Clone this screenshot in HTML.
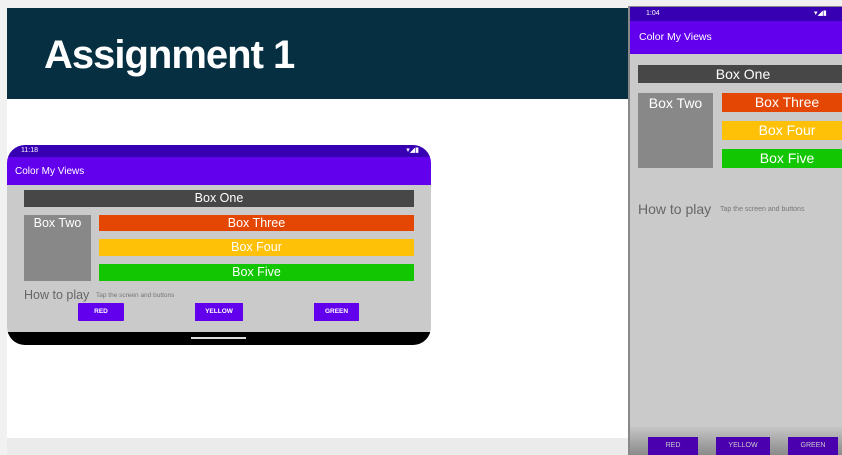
<!DOCTYPE html>
<html><head><style>
*{margin:0;padding:0;box-sizing:border-box}
body{width:842px;height:455px;overflow:hidden;background:#f1f1f1;font-family:"Liberation Sans",sans-serif;position:relative}
.a{position:absolute}
.c{color:#fff;text-align:center;font-size:14px}
</style></head><body>
<div class="a" style="left:7px;top:8px;width:835px;height:430px;background:#fff"></div>
<div class="a" style="left:7px;top:438px;width:835px;height:17px;background:#ebebeb"></div>
<div class="a" style="left:7px;top:8px;width:621px;height:91px;background:#062f42"></div>
<div class="a" style="left:44px;top:33px;color:#fff;font-size:40px;font-weight:bold;letter-spacing:-1px">Assignment 1</div>

<!-- left phone -->
<div class="a" style="left:7px;top:145px;width:424px;height:200px;border-radius:18px;overflow:hidden;background:#cacaca">
 <div class="a" style="left:0;top:0;width:424px;height:12px;background:#3700b3;color:#fff;font-size:7px;padding:2px 0 0 14px">11:18<span style="position:absolute;right:12px;top:1px">▾◢▮</span></div>
 <div class="a" style="left:0;top:12px;width:424px;height:28px;background:#6200ee;color:#fff;font-size:10px;padding:9px 0 0 8px">Color My Views</div>
 <div class="a c" style="left:17px;top:45px;width:390px;height:17px;background:#474747;line-height:17px;font-size:12.5px">Box One</div>
 <div class="a c" style="left:17px;top:70px;width:67px;height:66px;background:#888;font-size:12.5px;padding-top:1px">Box Two</div>
 <div class="a c" style="left:92px;top:70px;width:315px;height:16px;background:#e44603;line-height:16px;font-size:12.5px">Box Three</div>
 <div class="a c" style="left:92px;top:94px;width:315px;height:17px;background:#ffc107;line-height:17px;font-size:12.5px">Box Four</div>
 <div class="a c" style="left:92px;top:119px;width:315px;height:17px;background:#12c702;line-height:17px;font-size:12.5px">Box Five</div>
 <div class="a" style="left:17px;top:143px;color:#666;font-size:12.5px">How to play</div>
 <div class="a" style="left:89px;top:147px;color:#777;font-size:6.5px">Tap the screen and buttons</div>
 <div class="a c" style="left:71px;top:158px;width:46px;height:18px;background:#6200ee;font-size:6.5px;line-height:18px;font-weight:bold;border-radius:1px">RED</div>
 <div class="a c" style="left:188px;top:158px;width:48px;height:18px;background:#6200ee;font-size:6.5px;line-height:18px;font-weight:bold">YELLOW</div>
 <div class="a c" style="left:307px;top:158px;width:45px;height:18px;background:#6200ee;font-size:6.5px;line-height:18px;font-weight:bold">GREEN</div>
 <div class="a" style="left:0;top:187px;width:424px;height:13px;background:#000"></div>
 <div class="a" style="left:184px;top:192px;width:55px;height:2px;background:#ddd"></div>
</div>

<!-- right phone -->
<div class="a" style="left:628px;top:6px;width:214px;height:449px;background:#cacaca;border-left:2px solid #888;border-top:1px solid #888;overflow:hidden">
 <div class="a" style="left:0;top:0;width:214px;height:14px;background:#3700b3;color:#fff;font-size:7px;padding:3px 0 0 16px">1:04<span style="position:absolute;left:184px;top:2px">▾◢▮</span></div>
 <div class="a" style="left:0;top:14px;width:214px;height:33px;background:#6200ee;color:#fff;font-size:10.5px;padding:10px 0 0 9px">Color My Views</div>
 <div class="a c" style="left:8px;top:58px;width:210px;height:18px;background:#474747;line-height:18px">Box One</div>
 <div class="a c" style="left:8px;top:86px;width:75px;height:75px;background:#888;padding-top:2px">Box Two</div>
 <div class="a c" style="left:92px;top:86px;width:130px;height:19px;background:#e44603;line-height:19px">Box Three</div>
 <div class="a c" style="left:92px;top:114px;width:130px;height:19px;background:#ffc107;line-height:19px">Box Four</div>
 <div class="a c" style="left:92px;top:142px;width:130px;height:19px;background:#12c702;line-height:19px">Box Five</div>
 <div class="a" style="left:8px;top:194px;color:#666;font-size:14px">How to play</div>
 <div class="a" style="left:90px;top:199px;color:#777;font-size:7px">Tap the screen and buttons</div>
 <div class="a" style="left:0;top:420px;width:214px;height:29px;background:linear-gradient(#c5c5c5,#888)"></div>
 <div class="a c" style="left:18px;top:430px;width:50px;height:20px;background:#4b00b0;font-size:7px;line-height:18px;color:#ccc">RED</div>
 <div class="a c" style="left:86px;top:430px;width:54px;height:20px;background:#4b00b0;font-size:7px;line-height:18px;color:#ccc">YELLOW</div>
 <div class="a c" style="left:158px;top:430px;width:50px;height:20px;background:#4b00b0;font-size:7px;line-height:18px;color:#ccc">GREEN</div>
</div>
</body></html>
